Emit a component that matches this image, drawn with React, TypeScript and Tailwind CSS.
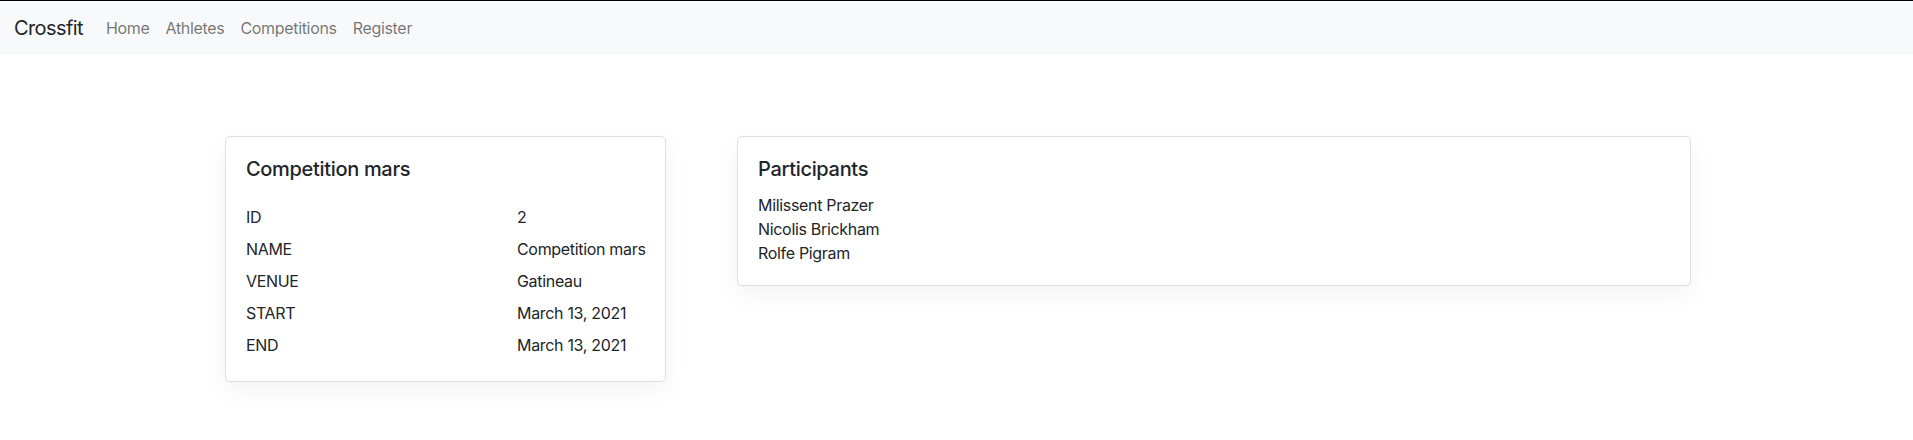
const font = { fontFamily: 'Inter, "Noto Sans", sans-serif' }

const details: [string, string][] = [
  ['ID', '2'],
  ['NAME', 'Competition mars'],
  ['VENUE', 'Gatineau'],
  ['START', 'March 13, 2021'],
  ['END', 'March 13, 2021'],
]

const participants = ['Milissent Prazer', 'Nicolis Brickham', 'Rolfe Pigram']

export default function App() {
  return (
    <div className="min-h-[440px] bg-white text-[#212529] tracking-[-0.02em]" style={font}>
      {/* Navbar */}
      <nav className="h-[55px] bg-[#f8f9fa] border-t border-black flex items-center px-[14px]">
        <span className="text-[20px] leading-none mr-[15px] tracking-[-0.03em]">Crossfit</span>
        <div className="flex items-center text-[16px] text-[#000000]/55">
          <a className="px-[8px]">Home</a>
          <a className="px-[8px]">Athletes</a>
          <a className="px-[8px]">Competitions</a>
          <a className="px-[8px]">Register</a>
        </div>
      </nav>

      <div className="flex items-start gap-[71px] pl-[225px] pt-[81px]">
        {/* Competition card */}
        <div className="w-[441px] bg-white border border-[#dfdfdf] rounded-[5px] shadow-[0_0.5rem_1.5rem_rgba(0,0,0,0.05)] px-[20px] py-[20px]">
          <h5 className="text-[20px] leading-[24px] font-medium mb-[20px]">Competition mars</h5>
          <div className="grid grid-cols-[271px_1fr] text-[16px]">
            {details.map(([k, v]) => (
              <div key={k} className="contents">
                <div className="h-[32px] flex items-center whitespace-nowrap">{k}</div>
                <div className="h-[32px] flex items-center whitespace-nowrap">{v}</div>
              </div>
            ))}
          </div>
        </div>

        {/* Participants card */}
        <div className="w-[954px] bg-white border border-[#dfdfdf] rounded-[5px] shadow-[0_0.5rem_1.5rem_rgba(0,0,0,0.05)] px-[20px] py-[20px]">
          <h5 className="text-[20px] leading-[24px] font-medium mb-[12px]">Participants</h5>
          <ul className="text-[16px] leading-[24px]">
            {participants.map((p) => (
              <li key={p}>{p}</li>
            ))}
          </ul>
        </div>
      </div>
    </div>
  )
}
